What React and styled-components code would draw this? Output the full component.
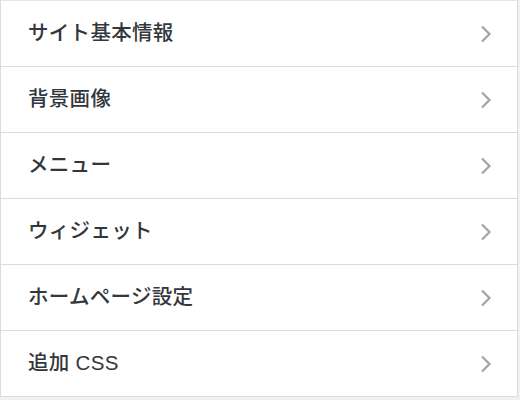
import React from "react";
import styled, { createGlobalStyle } from "styled-components";

const Global = createGlobalStyle`
  html, body { margin: 0; padding: 0; background: #fff; }
  body { font-family: "Liberation Sans", "Noto Sans CJK JP", sans-serif; }
`;

const Page = styled.div`
  width: 520px;
  height: 400px;
  overflow: hidden;
  background: #f1f1f1;
  display: flex;
  flex-direction: column;
`;

const Panel = styled.ul`
  list-style: none;
  margin: 0;
  padding: 0;
  width: 516px;
  background: #fff;
  border-top: 1px solid #e6e6e6;
  border-left: 1px solid #dcdcde;
  border-right: 1px solid #dcdcde;
`;

const Row = styled.li`
  height: 65px;
  display: flex;
  align-items: center;
  justify-content: space-between;
  padding: 0 24px 0 27px;
  border-bottom: 1px solid #dcdcde;
  color: #32373c;
  font-size: 20.5px;
  font-weight: 500;
  letter-spacing: 0.3px;
`;

const Label = styled.span`
  line-height: 1;
  padding-bottom: 1px;
`;

const Chevron = () => (
  <svg width="14" height="20" viewBox="0 0 14 20">
    <path d="M3 2.5 L10.5 10 L3 17.5" fill="none" stroke="#a0a5aa" strokeWidth="2.2" />
  </svg>
);

const items = ["サイト基本情報", "背景画像", "メニュー", "ウィジェット", "ホームページ設定", "追加 CSS"];

export default function App() {
  return (
    <Page>
      <Global />
      <Panel>
        {items.map((t) => (
          <Row key={t}>
            <Label>{t}</Label>
            <Chevron />
          </Row>
        ))}
      </Panel>
    </Page>
  );
}
